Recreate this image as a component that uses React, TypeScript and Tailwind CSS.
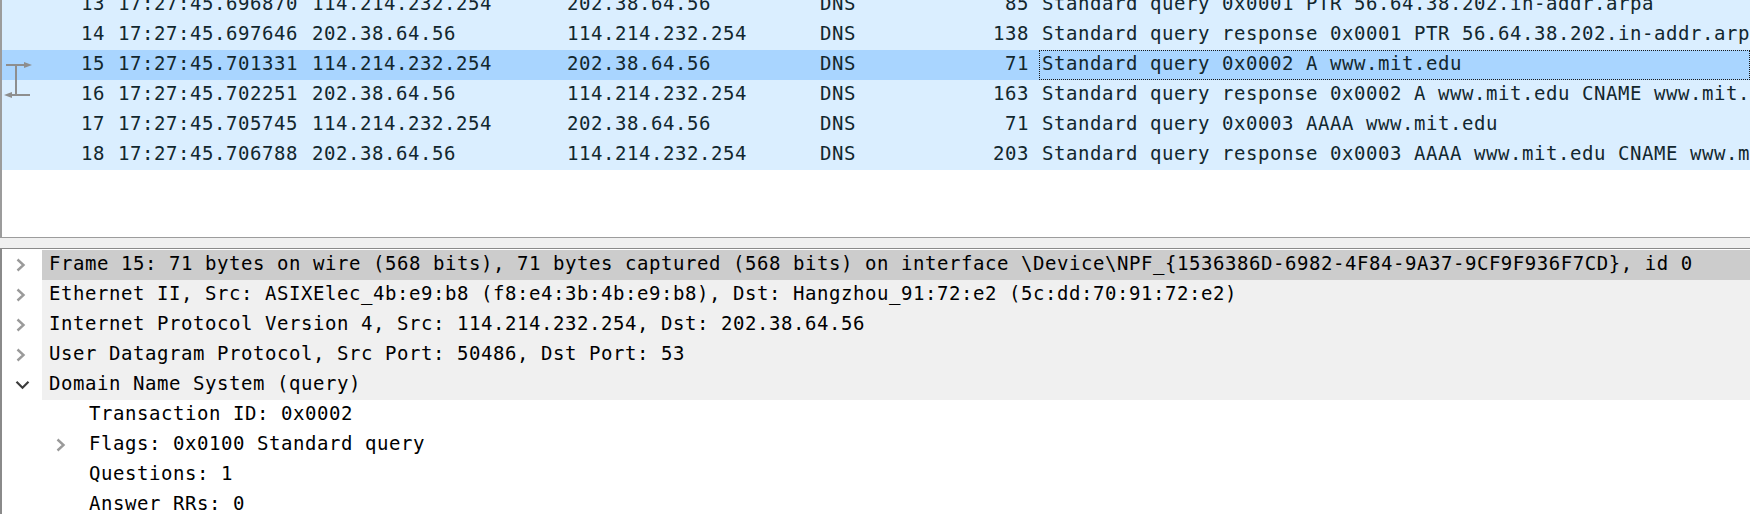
import React from "react";

type Pkt = { no: string; time: string; src: string; dst: string; proto: string; len: string; info: string };

const packets: Pkt[] = [
  { no: "13", time: "17:27:45.696870", src: "114.214.232.254", dst: "202.38.64.56", proto: "DNS", len: "85", info: "Standard query 0x0001 PTR 56.64.38.202.in-addr.arpa" },
  { no: "14", time: "17:27:45.697646", src: "202.38.64.56", dst: "114.214.232.254", proto: "DNS", len: "138", info: "Standard query response 0x0001 PTR 56.64.38.202.in-addr.arpa PTR www.ustc.edu.cn" },
  { no: "15", time: "17:27:45.701331", src: "114.214.232.254", dst: "202.38.64.56", proto: "DNS", len: "71", info: "Standard query 0x0002 A www.mit.edu" },
  { no: "16", time: "17:27:45.702251", src: "202.38.64.56", dst: "114.214.232.254", proto: "DNS", len: "163", info: "Standard query response 0x0002 A www.mit.edu CNAME www.mit.edu.edgekey.net CNAME e9566.dscb.akamaiedge.net" },
  { no: "17", time: "17:27:45.705745", src: "114.214.232.254", dst: "202.38.64.56", proto: "DNS", len: "71", info: "Standard query 0x0003 AAAA www.mit.edu" },
  { no: "18", time: "17:27:45.706788", src: "202.38.64.56", dst: "114.214.232.254", proto: "DNS", len: "203", info: "Standard query response 0x0003 AAAA www.mit.edu CNAME www.mit.edu.edgekey.net CNAME e9566.dscb.akamaiedge.net" },
];

function RelIcon({ kind }: { kind: "req" | "resp" }) {
  const c = "#8e8e8e";
  if (kind === "req") {
    return (
      <svg width="34" height="30" viewBox="0 0 34 30" className="shrink-0">
        <line x1="4" y1="15" x2="26" y2="15" stroke={c} strokeWidth="2" />
        <polygon points="22,12 30,15 22,18" fill={c} />
        <line x1="14" y1="15" x2="14" y2="30" stroke={c} strokeWidth="2" />
      </svg>
    );
  }
  return (
    <svg width="34" height="30" viewBox="0 0 34 30" className="shrink-0">
      <line x1="14" y1="0" x2="14" y2="15" stroke={c} strokeWidth="2" />
      <line x1="6" y1="15" x2="28" y2="15" stroke={c} strokeWidth="2" />
      <polygon points="10,12 2,15 10,18" fill={c} />
    </svg>
  );
}

function PacketRow({ p }: { p: Pkt }) {
  const sel = p.no === "15";
  return (
    <div className={`flex h-[30px] leading-[26px] whitespace-nowrap text-[#12272e] ${sel ? "bg-[#a9d5ff]" : "bg-[#daeeff]"}`}>
      <div className="w-[103px] shrink-0 flex">
        {p.no === "15" ? <RelIcon kind="req" /> : p.no === "16" ? <RelIcon kind="resp" /> : null}
        <div className="flex-1 text-right">{p.no}</div>
      </div>
      <div className="w-[13px] shrink-0" />
      <div className="w-[194px] shrink-0">{p.time}</div>
      <div className="w-[255px] shrink-0">{p.src}</div>
      <div className="w-[253px] shrink-0">{p.dst}</div>
      <div className="w-[150px] shrink-0">{p.proto}</div>
      <div className="w-[59px] shrink-0 text-right">{p.len}</div>
      <div className="w-[10px] shrink-0" />
      <div className={`flex-1 min-w-0 overflow-hidden border border-dotted pl-[2px] ${sel ? "border-[#1a1a1a]" : "border-transparent"}`}>
        <span className="relative -top-[1px]">{p.info}</span>
      </div>
    </div>
  );
}

function ChevronRight() {
  return (
    <svg width="12" height="14" viewBox="0 0 12 14">
      <polyline points="2.5,1.5 8.5,7 2.5,12.5" fill="none" stroke="#9a9a9a" strokeWidth="2.4" />
    </svg>
  );
}

function ChevronDown() {
  return (
    <svg width="15" height="10" viewBox="0 0 15 10">
      <polyline points="1.5,1.8 7.5,7.8 13.5,1.8" fill="none" stroke="#3c3c3c" strokeWidth="2.2" />
    </svg>
  );
}

type Node = { text: string; level: number; arrow: "right" | "down" | "none"; bg: string };

const nodes: Node[] = [
  { text: "Frame 15: 71 bytes on wire (568 bits), 71 bytes captured (568 bits) on interface \\Device\\NPF_{1536386D-6982-4F84-9A37-9CF9F936F7CD}, id 0", level: 0, arrow: "right", bg: "bg-[#cccccc]" },
  { text: "Ethernet II, Src: ASIXElec_4b:e9:b8 (f8:e4:3b:4b:e9:b8), Dst: Hangzhou_91:72:e2 (5c:dd:70:91:72:e2)", level: 0, arrow: "right", bg: "bg-[#f0f0f0]" },
  { text: "Internet Protocol Version 4, Src: 114.214.232.254, Dst: 202.38.64.56", level: 0, arrow: "right", bg: "bg-[#f0f0f0]" },
  { text: "User Datagram Protocol, Src Port: 50486, Dst Port: 53", level: 0, arrow: "right", bg: "bg-[#f0f0f0]" },
  { text: "Domain Name System (query)", level: 0, arrow: "down", bg: "bg-[#f0f0f0]" },
  { text: "Transaction ID: 0x0002", level: 1, arrow: "none", bg: "bg-white" },
  { text: "Flags: 0x0100 Standard query", level: 1, arrow: "right", bg: "bg-white" },
  { text: "Questions: 1", level: 1, arrow: "none", bg: "bg-white" },
  { text: "Answer RRs: 0", level: 1, arrow: "none", bg: "bg-white" },
];

function TreeRow({ n }: { n: Node }) {
  return (
    <div className="flex h-[30px] whitespace-nowrap text-black">
      {n.level === 1 && <div className="w-[40px] shrink-0" />}
      <div className="w-[40px] shrink-0 flex items-center pl-[13px] pb-[1px]">
        {n.arrow === "right" ? <ChevronRight /> : n.arrow === "down" ? <ChevronDown /> : null}
      </div>
      <div className={`flex-1 min-w-0 overflow-hidden leading-[26px] pl-[7px] ${n.bg}`}>{n.text}</div>
    </div>
  );
}

export default function App() {
  return (
    <div className="w-[1750px] h-[514px] overflow-hidden bg-white font-['DejaVu_Sans_Mono','Liberation_Mono',monospace] text-[19px] tracking-[0.56px]">
      <div className="h-[238px] border-l-2 border-b border-[#9c9c9c] bg-white overflow-hidden">
        <div className="-mt-[10px]">
          {packets.map((p) => (
            <PacketRow key={p.no} p={p} />
          ))}
        </div>
      </div>
      <div className="h-[10px] bg-[#f0f0f0]" />
      <div className="h-[266px] border-t border-l-2 border-[#8a8a8a] bg-white pt-[1px] overflow-hidden">
        {nodes.map((n, i) => (
          <TreeRow key={i} n={n} />
        ))}
      </div>
    </div>
  );
}
